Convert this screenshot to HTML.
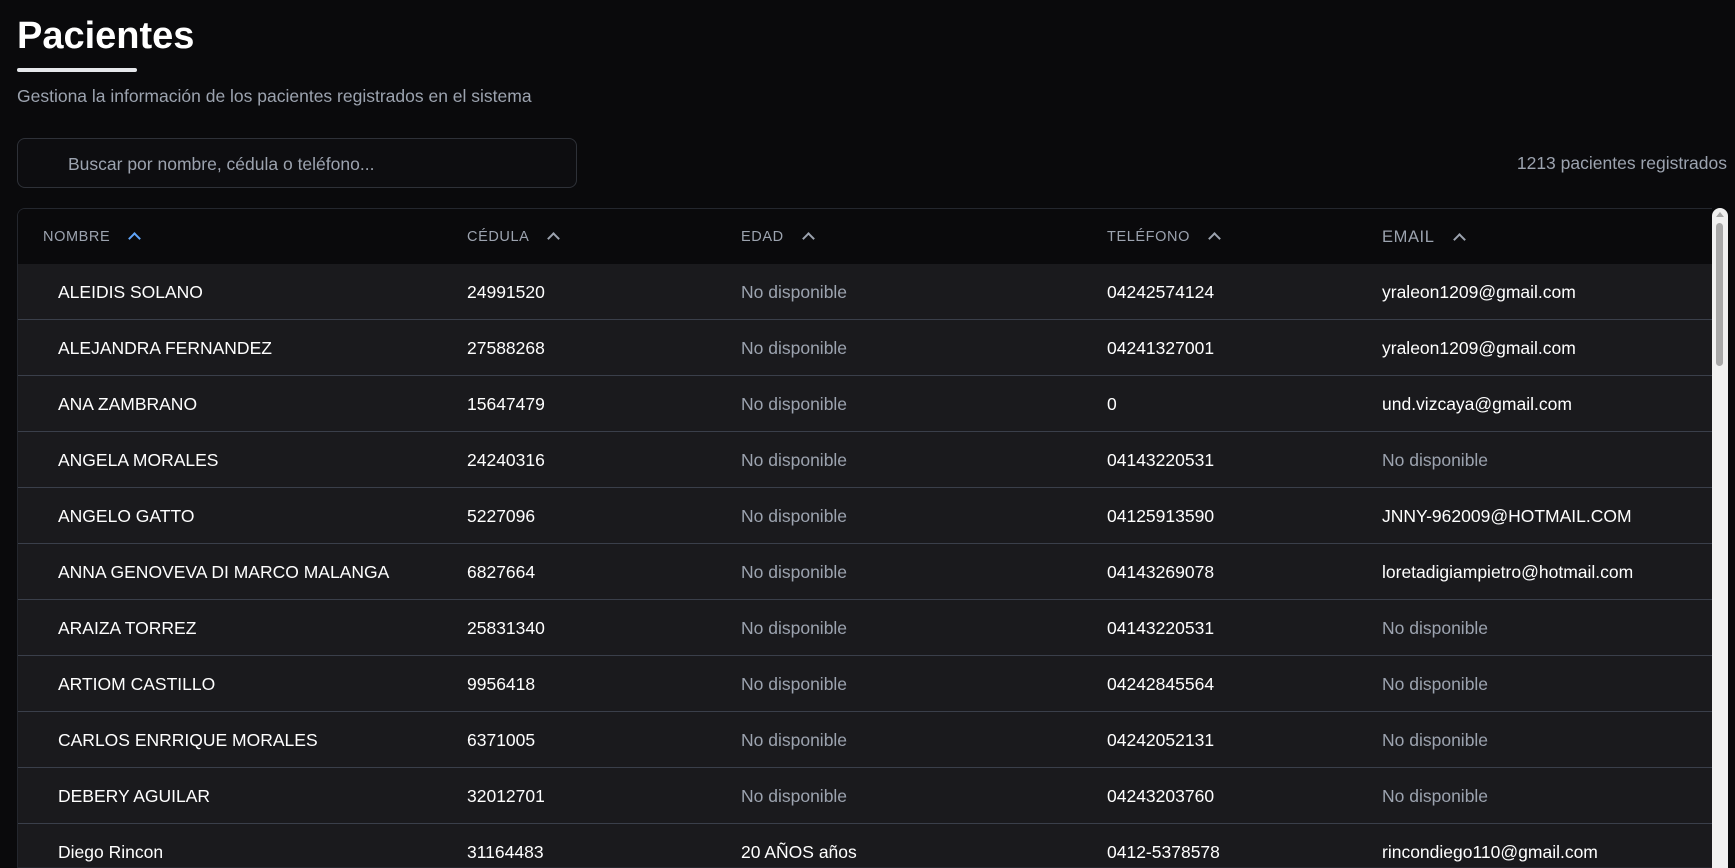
<!DOCTYPE html>
<html><head><meta charset="utf-8"><style>
*{margin:0;padding:0;box-sizing:border-box}
html,body{width:1735px;height:857px;overflow:hidden;background:#0a0a0c;font-family:"Liberation Sans",Arial,sans-serif;color:#fff}
h1{position:absolute;left:17px;top:15px;font-size:38px;font-weight:700;letter-spacing:0}
.ul{position:absolute;left:17px;top:68px;width:120px;height:4px;border-radius:2px;background:#e5e7eb}
.sub{position:absolute;left:17px;top:86px;font-size:17.5px;color:#9ca3af}
.search{position:absolute;left:17px;top:138px;width:560px;height:50px;border:1px solid #2e3138;border-radius:8px;background:#0d0d10}
.search span{position:absolute;left:50px;top:15px;font-size:17.5px;color:#9ca3af}
.count{position:absolute;right:8px;top:153px;font-size:17.5px;color:#9ca3af}
.tbl{position:absolute;left:17px;top:208px;width:1695px;height:660px;border:1px solid #24272e;border-radius:8px 0 0 0;overflow:hidden;border-right:none}
.hd{height:55px;background:#0a0a0c;position:relative;font-size:14.5px;color:#9ca3af;letter-spacing:.6px}
.hd div{position:absolute;top:20px}
.row{height:56px;background:#1a1a1d;border-bottom:1px solid #3a3f4a;position:relative;font-size:17.5px}
.row div{position:absolute;top:18px;white-space:nowrap}
.g{color:#9ca3af}
.c0{left:40px}.c1{left:449px}.c2{left:723px}.c3{left:1089px}.c4{left:1364px}
.hd .c0{left:25px}
.car{display:inline-block;width:9px;height:9px;border-left:2px solid #9ca3af;border-top:2px solid #9ca3af;transform:rotate(45deg);margin-left:20px;position:relative;top:2px}
.sb{position:absolute;left:1712px;top:208px;width:16px;height:660px;background:#f1f1f1;border-radius:8px 8px 0 0}
.sb i{position:absolute;left:4px;top:15px;width:7px;height:143px;background:#a8a8a8;border-radius:4px}
.sb b{position:absolute;left:4px;top:4px;border-left:4px solid transparent;border-right:4px solid transparent;border-bottom:5px solid #a8a8a8}
</style></head><body>
<h1>Pacientes</h1>
<div class="ul"></div>
<div class="sub">Gestiona la información de los pacientes registrados en el sistema</div>
<div class="search"><span>Buscar por nombre, cédula o teléfono...</span></div>
<div class="count">1213 pacientes registrados</div>
<div class="tbl">
<div class="hd">
<div class="c0">NOMBRE<span class="car" style="border-color:#60a5fa"></span></div>
<div class="c1">CÉDULA<span class="car"></span></div>
<div class="c2">EDAD<span class="car"></span></div>
<div class="c3">TELÉFONO<span class="car"></span></div>
<div class="c4" style="font-size:16.5px;top:19px">EMAIL<span class="car"></span></div>
</div>
<div class="row"><div class="c0">ALEIDIS SOLANO</div><div class="c1">24991520</div><div class="c2 g">No disponible</div><div class="c3">04242574124</div><div class="c4">yraleon1209@gmail.com</div></div>
<div class="row"><div class="c0">ALEJANDRA FERNANDEZ</div><div class="c1">27588268</div><div class="c2 g">No disponible</div><div class="c3">04241327001</div><div class="c4">yraleon1209@gmail.com</div></div>
<div class="row"><div class="c0">ANA ZAMBRANO</div><div class="c1">15647479</div><div class="c2 g">No disponible</div><div class="c3">0</div><div class="c4">und.vizcaya@gmail.com</div></div>
<div class="row"><div class="c0">ANGELA MORALES</div><div class="c1">24240316</div><div class="c2 g">No disponible</div><div class="c3">04143220531</div><div class="c4 g">No disponible</div></div>
<div class="row"><div class="c0">ANGELO GATTO</div><div class="c1">5227096</div><div class="c2 g">No disponible</div><div class="c3">04125913590</div><div class="c4">JNNY-962009@HOTMAIL.COM</div></div>
<div class="row"><div class="c0">ANNA GENOVEVA DI MARCO MALANGA</div><div class="c1">6827664</div><div class="c2 g">No disponible</div><div class="c3">04143269078</div><div class="c4">loretadigiampietro@hotmail.com</div></div>
<div class="row"><div class="c0">ARAIZA TORREZ</div><div class="c1">25831340</div><div class="c2 g">No disponible</div><div class="c3">04143220531</div><div class="c4 g">No disponible</div></div>
<div class="row"><div class="c0">ARTIOM CASTILLO</div><div class="c1">9956418</div><div class="c2 g">No disponible</div><div class="c3">04242845564</div><div class="c4 g">No disponible</div></div>
<div class="row"><div class="c0">CARLOS ENRRIQUE MORALES</div><div class="c1">6371005</div><div class="c2 g">No disponible</div><div class="c3">04242052131</div><div class="c4 g">No disponible</div></div>
<div class="row"><div class="c0">DEBERY AGUILAR</div><div class="c1">32012701</div><div class="c2 g">No disponible</div><div class="c3">04243203760</div><div class="c4 g">No disponible</div></div>
<div class="row"><div class="c0">Diego Rincon</div><div class="c1">31164483</div><div class="c2">20 AÑOS años</div><div class="c3">0412-5378578</div><div class="c4">rincondiego110@gmail.com</div></div>
</div>
<div class="sb"><b></b><i></i></div>
</body></html>
